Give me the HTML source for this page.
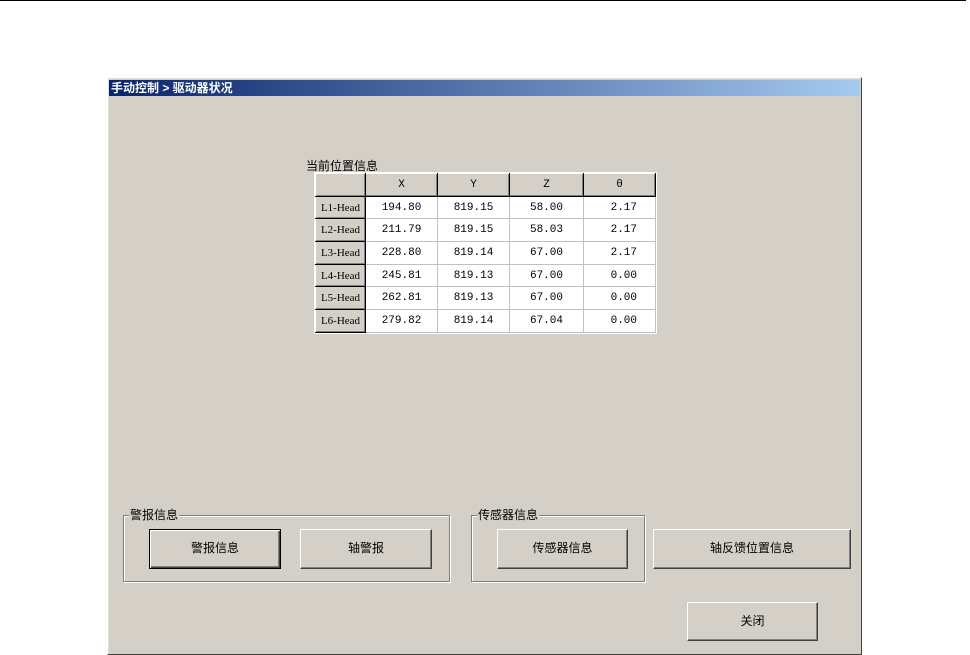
<!DOCTYPE html>
<html><head><meta charset="utf-8"><style>
*{margin:0;padding:0;box-sizing:border-box}
body{width:970px;height:654px;background:#fff;position:relative;overflow:hidden;font-family:"Liberation Sans","WenQuanYi Zen Hei","Noto Sans CJK SC",sans-serif;font-size:12px;color:#000}
.a{position:absolute}
#topline{left:0;top:0;width:966px;height:1px;background:#000}
#win{left:107px;top:77px;width:755px;height:578px;background:#d4d0c8;border:1px solid #fff;border-right-color:#404040;border-bottom-color:#404040;box-shadow:inset 1px 1px 0 #dcdcdc}
#title{left:109px;top:80px;width:751px;height:16px;background:linear-gradient(90deg,#0a246a,#a6caf0);color:#fff;font-weight:bold;font-size:12px;line-height:16px;padding-left:2px}
table{border-collapse:collapse;position:absolute;left:315px;top:173px;background:#fff;border:1px solid #808080;outline:1px solid #fff}
td{border:1px solid #c0c0c0;height:22.7px;font-family:"Liberation Mono",monospace;font-size:11px;text-align:center;padding:0}
td.h{background:#d4d0c8;border:1px solid #000;border-top-color:#fff;border-left-color:#fff;box-shadow:inset -1px -1px 0 #808080;font-family:"Liberation Serif",serif}
tr.hd td{background:#d4d0c8;border:1px solid #000;border-top-color:#fff;border-left-color:#fff;box-shadow:inset -1px -1px 0 #808080}
td.r{text-align:right;padding-right:18px}
.grp{border:1px solid #808080;box-shadow:1px 1px 0 #fff,inset 1px 1px 0 #fff}
.lg{background:#d4d0c8;padding:0 1px;top:-8px;left:5px;position:absolute;line-height:14px}
.btn{background:#d4d0c8;border:1px solid #fff;border-right-color:#404040;border-bottom-color:#404040;box-shadow:inset -1px -1px 0 #808080;text-align:center;line-height:37px;font-size:12px}
.def{border:1px solid #000;box-shadow:inset 1px 1px 0 #fff,inset -1px -1px 0 #404040,inset -2px -2px 0 #808080}
</style></head><body>
<div id="topline" class="a"></div>
<div id="win" class="a"></div>
<div id="title" class="a">手动控制 &gt; 驱动器状况</div>
<div class="a" style="left:306px;top:157px;font-size:12px">当前位置信息</div>
<table>
<tr class="hd"><td style="width:50px"></td><td style="width:72px">X</td><td style="width:72px">Y</td><td style="width:74px">Z</td><td style="width:72px">θ</td></tr>
<tr><td class="h">L1-Head</td><td>194.80</td><td>819.15</td><td>58.00</td><td class="r">2.17</td></tr>
<tr><td class="h">L2-Head</td><td>211.79</td><td>819.15</td><td>58.03</td><td class="r">2.17</td></tr>
<tr><td class="h">L3-Head</td><td>228.80</td><td>819.14</td><td>67.00</td><td class="r">2.17</td></tr>
<tr><td class="h">L4-Head</td><td>245.81</td><td>819.13</td><td>67.00</td><td class="r">0.00</td></tr>
<tr><td class="h">L5-Head</td><td>262.81</td><td>819.13</td><td>67.00</td><td class="r">0.00</td></tr>
<tr><td class="h">L6-Head</td><td>279.82</td><td>819.14</td><td>67.04</td><td class="r">0.00</td></tr>
</table>
<div class="a grp" style="left:123px;top:515px;width:327px;height:67px"><span class="lg">警报信息</span></div>
<div class="a btn def" style="left:149px;top:529px;width:132px;height:40px">警报信息</div>
<div class="a btn" style="left:300px;top:529px;width:132px;height:40px">轴警报</div>
<div class="a grp" style="left:471px;top:515px;width:174px;height:67px"><span class="lg">传感器信息</span></div>
<div class="a btn" style="left:497px;top:529px;width:131px;height:40px">传感器信息</div>
<div class="a btn" style="left:653px;top:529px;width:198px;height:40px">轴反馈位置信息</div>
<div class="a btn" style="left:687px;top:602px;width:131px;height:39px">关闭</div>
</body></html>
